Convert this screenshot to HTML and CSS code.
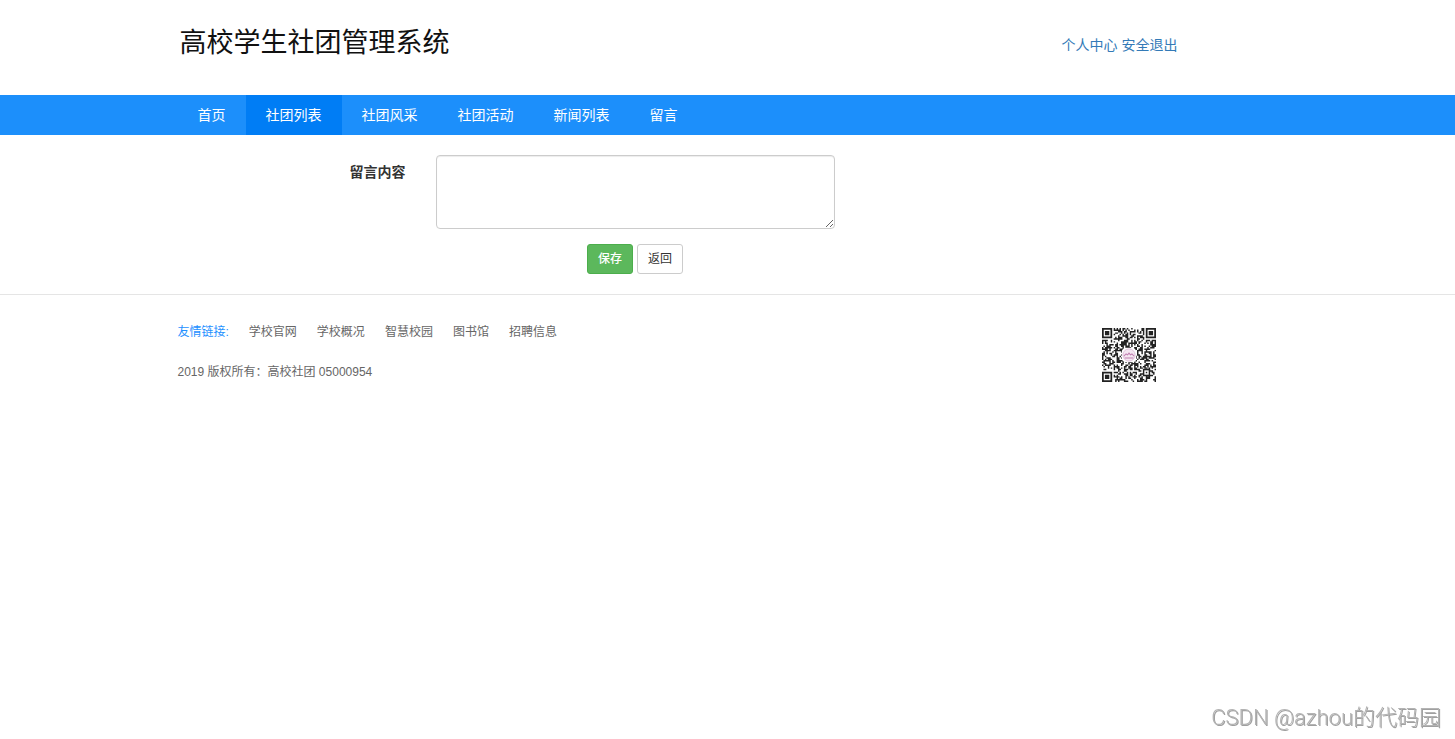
FILE: index.html
```html
<!DOCTYPE html>
<html lang="zh-CN">
<head>
<meta charset="utf-8">
<title>高校学生社团管理系统</title>
<link rel="stylesheet" href="styles.css">
</head>
<body>
<header class="header">
  <div class="container header-inner">
    <h1 class="logo">高校学生社团管理系统</h1>
    <div class="user-links"><a href="#">个人中心</a> <a href="#">安全退出</a></div>
  </div>
</header>
<nav class="nav">
  <div class="container nav-list">
    <a href="#">首页</a>
    <a href="#" class="active">社团列表</a>
    <a href="#">社团风采</a>
    <a href="#">社团活动</a>
    <a href="#">新闻列表</a>
    <a href="#">留言</a>
  </div>
</nav>
<main class="container">
  <form class="form">
    <label class="form-label" for="content">留言内容</label>
    <textarea class="form-text" id="content" rows="3"></textarea>
    <div class="form-actions">
      <button type="button" class="btn btn-save">保存</button>
      <button type="button" class="btn">返回</button>
    </div>
  </form>
</main>
<footer class="footer">
  <div class="container footer-inner">
    <div>
      <div class="friend-links">
        <span class="friend-title">友情链接:</span>
        <a href="#">学校官网</a>
        <a href="#">学校概况</a>
        <a href="#">智慧校园</a>
        <a href="#">图书馆</a>
        <a href="#">招聘信息</a>
      </div>
      <p class="copyright">2019 版权所有：高校社团 05000954</p>
    </div>
    <svg class="qr" viewBox="0 0 37 37" aria-hidden="true">
      <path id="modules" fill="#222"/>
      <g fill="none" stroke="#222" stroke-width="1.2"><path d="M.6 .6h5.8v5.8h-5.8zM30.6 .6h5.8v5.8h-5.8zM.6 30.6h5.8v5.8h-5.8z"/></g>
      <path fill="#222" d="M2 2h3v3h-3zM32 2h3v3h-3zM2 32h3v3h-3zM28 28h5v5h-5z"/>
      <path fill="#fff" d="M29 29h3v3h-3z"/>
      <path fill="#222" d="M30 30h1v1h-1z"/>
      <rect x="13.5" y="13.5" width="10" height="10" rx="3" fill="#fff"/>
      <circle cx="18.5" cy="18.5" r="4.2" fill="#f4e6f1" stroke="#dcbcd6" stroke-width=".6"/>
      <path d="M15 19.2l1.5-1.4 1 .6 1-1.2 1 1.2 1-.6 1.5 1.4M15.5 20.5h6" fill="none" stroke="#c07fb0" stroke-width=".7"/>
    </svg>
  </div>
</footer>
<div class="watermark">CSDN @azhou的代码园</div>
<script src="qr.js"></script>
</body>
</html>
```

FILE: styles.css
```css
* { box-sizing: border-box; }
body {
  margin: 0;
  background: #fff;
  color: #333;
  font: 14px/20px "Liberation Sans", "Noto Sans CJK SC", sans-serif;
}
a { text-decoration: none; }
.container { max-width: 1100px; margin: 0 auto; }
.header-inner {
  display: flex;
  justify-content: space-between;
  align-items: flex-start;
  padding: 20px 100px 28px 2px;
}
.logo { margin: 0; color: #111; font-size: 27px; font-weight: 400; line-height: 47px; }
.user-links { padding-top: 15px; }
.user-links a { color: #337ab7; }
.nav { background: #1c8ffb; }
.nav-list { display: flex; }
.nav a { padding: 0 20px; color: #fff; line-height: 40px; }
.nav .active { background: #007df5; }
.form {
  display: grid;
  grid-template-columns: 228px minmax(0, 399px);
  gap: 15px 30px;
  padding: 20px 0;
}
.form-label { padding-top: 7px; text-align: right; font-weight: 700; }
.form-text {
  display: block;
  width: 100%;
  height: 74px;
  padding: 6px 12px;
  border: 1px solid #ccc;
  border-radius: 4px;
  box-shadow: inset 0 1px 1px rgba(0, 0, 0, .075);
  font: inherit;
  resize: vertical;
}
.form-actions { grid-column: 2; display: flex; justify-content: center; gap: 4px; }
.btn {
  height: 30px;
  padding: 0 10px;
  border: 1px solid #ccc;
  border-radius: 3px;
  background: #fff;
  color: #333;
  font: 12px/18px "Liberation Sans", "Noto Sans CJK SC", sans-serif;
}
.btn-save { border-color: #4cae4c; background: #5cb85c; color: #fff; font-weight: 500; }
.footer { border-top: 1px solid #e5e5e5; color: #666; font-size: 12px; }
.footer-inner { display: flex; justify-content: space-between; padding: 17px 122px 30px 0; }
.friend-links { display: flex; flex-wrap: wrap; gap: 20px; line-height: 40px; }
.friend-links a { color: #666; }
.friend-title { color: #1e90ff; }
.copyright { margin: 0; line-height: 40px; }
.qr { width: 54px; height: 54px; margin-top: 16px; }
.watermark {
  position: fixed;
  right: 14px;
  bottom: 5px;
  color: #b4b4b4;
  font: 300 22px/32px Roboto, "Noto Sans CJK SC", sans-serif;
  text-shadow: 1px 1px 0 #a0a0a0;
}
```

FILE: qr.js
```js
// Fills the data area of the code, leaving the three corner markers clear.
const size = 37;
let seed = 2019;
let d = "";
for (let y = 0; y < size; y++) {
  for (let x = 0; x < size; x++) {
    seed = (seed * 1103515245 + 12345) % 2147483648;
    const corner = (x < 8 && y < 8) || (x > 28 && y < 8) || (x < 8 && y > 28);
    if (!corner && seed / 2147483648 < 0.52) d += `M${x} ${y}h1v1h-1z`;
  }
}
document.getElementById("modules").setAttribute("d", d);
```
